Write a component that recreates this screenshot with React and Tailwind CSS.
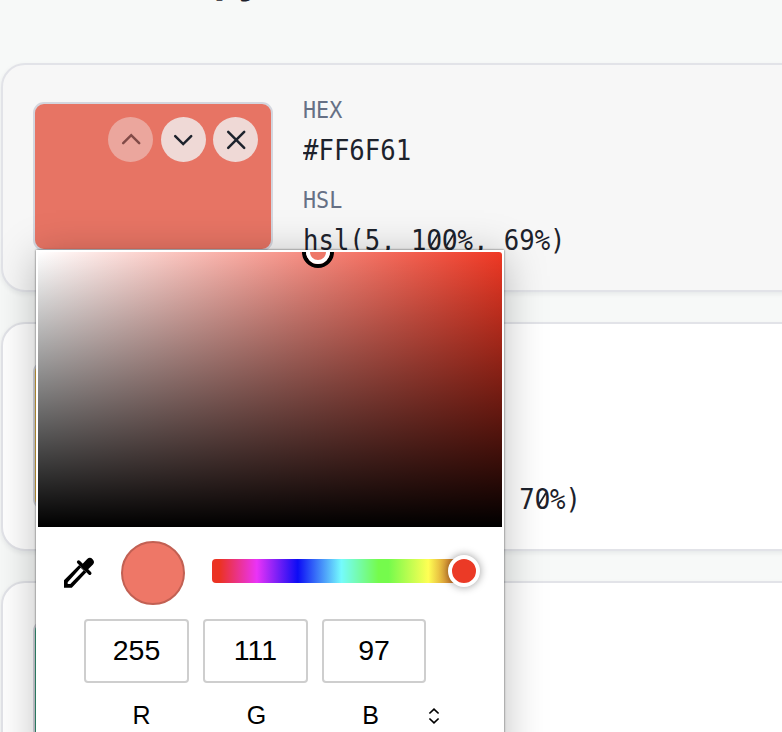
const MONO = "font-['DejaVu_Sans_Mono',monospace]";

// Monospaced value; zeros carry a slash
function Value({ text }) {
  return (
    <div className={`${MONO} h-[32px] origin-left scale-x-[0.922] text-[27.8px] leading-[32px] whitespace-pre text-[#1d222c]`}>
      {text.split("").map((c, i) =>
        c === "0" ? (
          <span key={i} className="relative">
            O
            <span className="absolute top-[15px] left-[1px] h-[2px] w-[15px] -rotate-[56deg] bg-[#1d222c]" />
          </span>
        ) : (
          <span key={i}>{c}</span>
        ),
      )}
    </div>
  );
}

function Label({ children }) {
  return (
    <div className={`${MONO} h-[28px] origin-left scale-x-[0.93] text-[23.4px] leading-[28px] text-[#667085]`}>{children}</div>
  );
}

function RoundButton({ d, faded }) {
  return (
    <button
      className={
        "flex size-[45px] shrink-0 items-center justify-center rounded-full bg-[#efd9d6] text-[#1d222c] " +
        (faded ? "opacity-50" : "")
      }
    >
      <svg width="24" height="24" viewBox="0 0 24 24" fill="none" stroke="currentColor" strokeWidth="2.5" strokeLinecap="round">
        <path d={d} />
      </svg>
    </button>
  );
}

function ColorCard({ swatch, card, hex, hsl, controls }) {
  return (
    <section className={`flex h-[229px] w-[900px] shrink-0 gap-[30px] rounded-[24px] border-2 border-[#e2e3e8] pt-[37px] pl-[30px] shadow-[0_2px_5px_rgba(16,24,40,0.07)] ${card}`}>
      <div className={`flex h-[149px] w-[240px] shrink-0 justify-end gap-[7.5px] rounded-[11px] border-2 border-[#d4d6de] pt-[13px] pr-[13px] ${swatch}`}>
        {controls && (
          <>
            <RoundButton faded d="M4.2 15.2l8-8 8 8" />
            <RoundButton d="M4.2 8.1l8 8 8-8" />
            <RoundButton d="M4.2 3.8l16 16M20.2 3.8l-16 16" />
          </>
        )}
      </div>
      <div className="-mt-[6px]">
        <Label>HEX</Label>
        <div className="mt-[11px]"><Value text={hex} /></div>
        <div className="mt-[19px]"><Label>HSL</Label></div>
        <div className="mt-[11px]"><Value text={hsl} /></div>
      </div>
    </section>
  );
}

function Channel({ value, width = "w-[105px]" }) {
  return (
    <div className={`flex h-[64px] ${width} items-center justify-center rounded-[4px] border-2 border-[#cecece] text-[28.5px] leading-none`}>
      <span className="-mt-[2px]">{value}</span>
    </div>
  );
}

function Picker() {
  return (
    <div className="absolute top-[250px] left-[36px] h-[520px] w-[468px] bg-white p-[2px] font-['Liberation_Sans',sans-serif] text-black shadow-[0_0_2px_rgba(0,0,0,0.65),0_6px_40px_rgba(0,0,0,0.26)]">
      <div className="relative h-[275px] overflow-hidden rounded-t-[3px] bg-[linear-gradient(to_top,#000,transparent),linear-gradient(to_right,#fff,#ef3824)]">
        <div className="absolute -top-[16px] left-[264px] size-[32px] rounded-full border-4 border-black bg-[#ee7767]">
          <div className="size-full rounded-full border-4 border-white" />
        </div>
      </div>
      <div className="flex h-[92px] items-center pl-[26px]">
        <svg className="size-[32px]" viewBox="0 0 32 32">
          <path fillRule="evenodd" d="M0 23.2L15.2 8l7.2 7.2L7.8 30.8H0zM3.7 25.2v1.9h2.6L19.6 13.6l-2.9-2.9z" />
          <path d="M14.6 5L25.8 16.2" stroke="#000" strokeWidth="3.4" strokeLinecap="round" />
          <path d="M17 8.6L23.2 1.9q2.8-2.3 5.4.3t.4 5.4L22.4 14z" />
        </svg>
        <div className="ml-[25px] size-[64px] rounded-full border-2 border-[#c26053] bg-[#ee7767]" />
        <div className="relative -mt-[4px] ml-[27px] h-[24px] w-[256px] rounded-[4px] bg-[linear-gradient(to_right,#eb3323_3%,#ea33f7_17.5%,#0c0cf5_33.5%,#75fbfd_50.5%,#75fb4c_65%,#75fb4c_69%,#ffff54_84.5%,#c96a28_95%)]">
          <div className="absolute -top-[4px] left-[236px] size-[32px] rounded-full border-4 border-white bg-[#eb3a26] shadow-[0_0_8px_rgba(0,0,0,0.4)]" />
        </div>
      </div>
      <div className="flex gap-[14px] pl-[46px]">
        <Channel value="255" />
        <Channel value="111" />
        <Channel value="97" width="w-[104px]" />
      </div>
      <div className="flex h-[66px] items-center pl-[51px] text-[25px]">
        <span className="w-[105px] text-center">R</span>
        <span className="ml-[10px] w-[105px] text-center">G</span>
        <span className="ml-[9px] w-[105px] text-center">B</span>
        <svg className="ml-[5px]" width="12" height="16" viewBox="0 0 12 16" fill="none" stroke="#000" strokeWidth="1.7">
          <path d="M1.4 5.5L6 1.2l4.6 4.3M1.4 10.5L6 14.8l4.6-4.3" />
        </svg>
      </div>
    </div>
  );
}

export default function App() {
  return (
    <main className="relative h-[732px] w-[782px] overflow-hidden bg-[#f7f9f8]">
      <header className="flex h-[63px] items-start pl-[214px] font-['Inter',sans-serif] text-[40px] leading-[40px] font-bold text-[#1d222c]">
        <h1 className="-mt-[41px]">py</h1>
      </header>
      <div className="flex flex-col gap-[30px] pl-[1px]">
        <ColorCard controls card="bg-[#f7f7f7]" swatch="bg-[#e77464]" hex="#FF6F61" hsl="hsl(5, 100%, 69%)" />
        <ColorCard card="bg-white" swatch="bg-[#f4bd43]" hex="#FFD166" hsl="hsl(42, 100%, 70%)" />
        <ColorCard card="bg-white" swatch="bg-[#3fae8b]" hex="#06D6A0" hsl="hsl(164, 95%, 43%)" />
      </div>
      <Picker />
    </main>
  );
}
